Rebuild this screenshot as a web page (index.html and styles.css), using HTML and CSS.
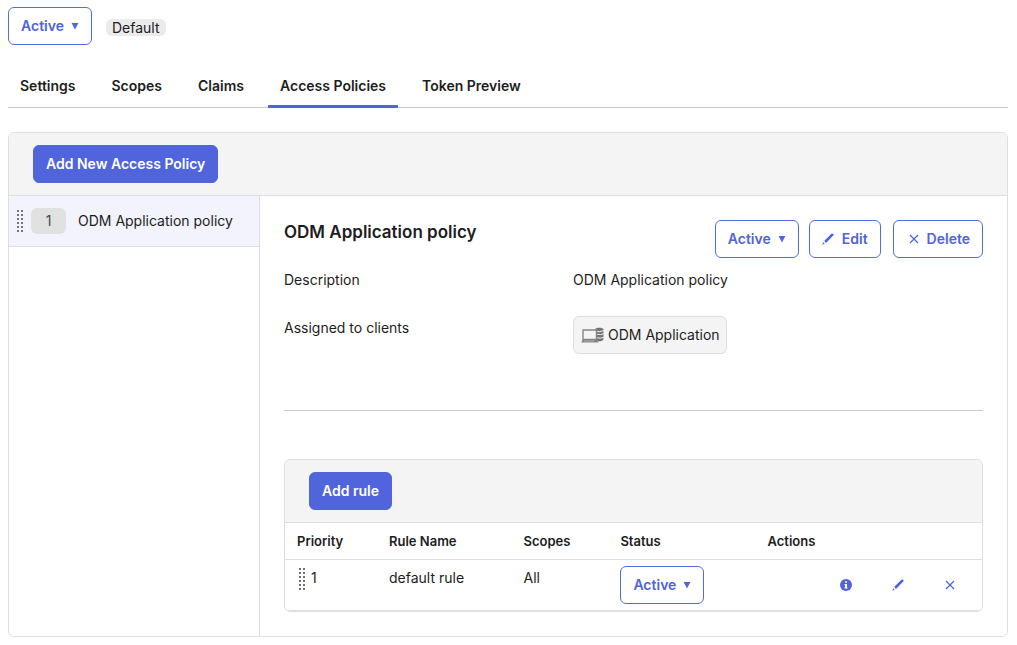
FILE: index.html
```html
<!DOCTYPE html>
<html lang="en">
<head>
<meta charset="utf-8">
<meta name="viewport" content="width=device-width, initial-scale=1">
<title>Access Policies</title>
<link rel="stylesheet" href="styles.css">
</head>
<body>
<svg class="sprite" aria-hidden="true">
  <symbol id="caret" viewBox="0 0 8 8"><path d="M0.6 1h6.8L4 7.6z" fill="currentColor"/></symbol>
  <symbol id="pencil" viewBox="0 0 12 12"><path d="M2.2 8 9.400 .8Q10.300 .1 11.200 .9T11.300 2.600L4 9.900zM1.300 9.300 2.700 10.700.2 11.800z" fill="currentColor"/></symbol>
  <symbol id="cross" viewBox="0 0 10 10"><path d="M1 1l8 8M9 1L1 9" fill="none" stroke="currentColor" stroke-width="1.200"/></symbol>
  <symbol id="info" viewBox="0 0 12 12"><circle cx="6" cy="6" r="6" fill="currentColor"/><path d="M5 2.200h2v1.600H5zM4.500 4.900H7v3.800h.7v.9H4.400v-.9H5V5.800h-.5z" fill="#fff"/></symbol>
  <symbol id="grip" viewBox="0 0 6 22"><path d="M1 0v22M5 0v22" stroke="currentColor" stroke-width="2" stroke-dasharray="2 2"/></symbol>
</svg>

<header class="status-bar">
  <span class="status">
    <select class="btn status-select" aria-label="Server status"><option>Active</option></select>
    <svg class="status-caret" aria-hidden="true"><use href="#caret"/></svg>
  </span>
  <span class="badge">Default</span>
</header>

<nav class="tabs">
  <a class="tab" href="#settings">Settings</a>
  <a class="tab" href="#scopes">Scopes</a>
  <a class="tab" href="#claims">Claims</a>
  <a class="tab tab-current" href="#policies" aria-current="page">Access Policies</a>
  <a class="tab" href="#preview">Token Preview</a>
</nav>

<main class="panel">
  <div class="toolbar"><button class="btn btn-primary" type="button">Add New Access Policy</button></div>
  <div class="columns">
    <aside class="sidebar">
      <a class="policy" href="#policy-1">
        <svg class="grip" aria-hidden="true"><use href="#grip"/></svg>
        <span class="order">1</span>
        <span>ODM Application policy</span>
      </a>
    </aside>
    <section class="detail">
      <div class="detail-head">
        <h2 class="title">ODM Application policy</h2>
        <div class="detail-actions">
          <span class="status">
            <select class="btn status-select" aria-label="Policy status"><option>Active</option></select>
            <svg class="status-caret" aria-hidden="true"><use href="#caret"/></svg>
          </span>
          <button class="btn" type="button"><svg class="icon" aria-hidden="true"><use href="#pencil"/></svg>Edit</button>
          <button class="btn btn-delete" type="button"><svg class="icon icon-cross" aria-hidden="true"><use href="#cross"/></svg>Delete</button>
        </div>
      </div>
      <dl class="facts">
        <dt>Description</dt>
        <dd>ODM Application policy</dd>
        <dt>Assigned to clients</dt>
        <dd class="clients"><span class="client">
          <svg class="client-icon" viewBox="0 0 23 17" aria-hidden="true">
            <path d="M14 2.500C14 .2 22.500 .2 22.500 2.500V12c0 2.200-4 2.500-5.500 2.200L14 12z" fill="#737373"/>
            <path d="M13.500 3.600q4.500 2.200 9.500 0M16 7.200q4 1 7-.6M16 10.800q4 1 7-.6" fill="none" stroke="#f4f4f4"/>
            <path d="M2 3h13.500v9.500H2z" fill="#f4f4f4" stroke="#858585" stroke-width="1.400"/>
            <path d="M1.500 13h15l1.200 2.500H.2z" fill="#858585"/>
            <path d="M3 14h10" stroke="#c8c8c8" stroke-width=".6"/>
          </svg>ODM Application</span></dd>
      </dl>
      <hr class="divider">
      <div class="rules">
        <div class="toolbar"><button class="btn btn-primary" type="button">Add rule</button></div>
        <table class="rule-table">
          <colgroup><col class="col-priority"><col class="col-name"><col class="col-scopes"><col class="col-status"><col></colgroup>
          <thead><tr><th>Priority</th><th>Rule Name</th><th>Scopes</th><th>Status</th><th>Actions</th></tr></thead>
          <tbody><tr>
            <td><span class="priority"><svg class="grip" aria-hidden="true"><use href="#grip"/></svg>1</span></td>
            <td>default rule</td>
            <td>All</td>
            <td class="cell-control"><span class="status">
              <select class="btn status-select" aria-label="Rule status"><option>Active</option></select>
              <svg class="status-caret" aria-hidden="true"><use href="#caret"/></svg>
            </span></td>
            <td class="cell-control"><div class="rule-actions">
              <button class="icon-btn" type="button" aria-label="Rule information"><svg class="icon" aria-hidden="true"><use href="#info"/></svg></button>
              <button class="icon-btn" type="button" aria-label="Edit rule"><svg class="icon" aria-hidden="true"><use href="#pencil"/></svg></button>
              <button class="icon-btn" type="button" aria-label="Delete rule"><svg class="icon icon-cross" aria-hidden="true"><use href="#cross"/></svg></button>
            </div></td>
          </tr></tbody>
        </table>
      </div>
    </section>
  </div>
</main>
</body>
</html>
```

FILE: styles.css
```css
* { box-sizing: border-box; }

body {
  margin: 7px 9px 8px 8px;
  background: #fff;
  color: #1d1d21;
  font: 14px/20px Inter, "Liberation Sans", sans-serif;
}

.sprite { display: block; width: 0; height: 0; }

.btn {
  display: inline-flex;
  align-items: center;
  gap: 8px;
  height: 38px;
  padding: 0 12px;
  border: 1px solid #546be7;
  border-radius: 6px;
  background: #fff;
  color: #4f63dc;
  font: 600 14px/20px Inter, "Liberation Sans", sans-serif;
  white-space: nowrap;
}

.btn-primary {
  background: #5064db;
  border-color: #5064db;
  color: #fff;
}

.btn-delete { padding-left: 15px; margin-left: 2px; }

.icon { width: 12px; height: 12px; }
.icon-cross { width: 10px; height: 10px; }

.status { display: inline-grid; align-items: center; width: 84px; color: #4f63dc; }
.status-select { grid-area: 1 / 1; width: 100%; appearance: none; }
.status-caret {
  grid-area: 1 / 1;
  justify-self: end;
  width: 8px;
  height: 8px;
  margin-right: 13px;
  pointer-events: none;
}

.status-bar { display: flex; align-items: center; gap: 14px; }
.badge {
  margin-top: 3px;
  padding: 0 6px;
  border-radius: 6px;
  background: #ebebeb;
  line-height: 17px;
}

.tabs {
  display: flex;
  gap: 12px;
  margin-top: 20px;
  border-bottom: 1px solid #c9c9c9;
}
.tab {
  margin-bottom: -1px;
  padding: 11px 12px 9px;
  border-bottom: 3px solid transparent;
  color: inherit;
  font-weight: 600;
  text-decoration: none;
}
.tab-current { border-color: #5064db; }

.panel {
  margin-top: 24px;
  overflow: hidden;
  border: 1px solid #dedede;
  border-radius: 6px;
}
.toolbar {
  display: flex;
  padding: 12px 24px;
  border-bottom: 1px solid #dedede;
  background: #f4f4f4;
}
.columns { display: flex; }
.sidebar { flex: 0 0 251px; border-right: 1px solid #dedede; }
.policy {
  display: flex;
  align-items: center;
  height: 51px;
  padding-left: 8px;
  border-bottom: 1px solid #dedede;
  background: #f2f3fd;
  color: inherit;
  text-decoration: none;
}
.grip { width: 6px; height: 22px; color: #72727a; }
.order {
  width: 35px;
  margin: 0 12px 0 8px;
  border-radius: 6px;
  background: #e1e1e1;
  color: #494950;
  line-height: 26px;
  text-align: center;
}

.detail { flex: 1; min-width: 0; padding: 24px; }
.detail-head { display: flex; justify-content: space-between; }
.detail-actions { display: flex; gap: 10px; }
.title { margin: 0; font-size: 17px; font-weight: 600; line-height: 24px; }

.facts {
  display: grid;
  grid-template-columns: 289px 1fr;
  row-gap: 28px;
  margin: 12px 0 56px;
}
.facts dd { margin: 0; }
.clients { margin-top: -2px; }
.client {
  display: flex;
  align-items: center;
  width: fit-content;
  gap: 4px;
  height: 38px;
  margin-top: -2px;
  padding: 0 6px 0 7px;
  border: 1px solid #dedede;
  border-radius: 6px;
  background: #f4f4f4;
}
.client-icon { width: 23px; height: 17px; }
.divider { margin: 0 0 48px; border: 0; border-top: 1px solid #c9c9c9; }

.rules { overflow: hidden; border: 1px solid #dedede; border-radius: 6px; }
.rule-table { width: 100%; border-collapse: collapse; table-layout: fixed; }
.col-priority { width: 13.2%; }
.col-name { width: 19.3%; }
.col-scopes { width: 13.9%; }
.col-status { width: 21.1%; }
.rule-table th {
  height: 36px;
  padding: 0 12px;
  border-bottom: 1px solid #dedede;
  font-size: 13px;
  font-weight: 600;
  text-align: left;
}
.rule-table td {
  height: 51px;
  padding: 8px 12px;
  border-bottom: 1px solid #dedede;
  vertical-align: top;
}
.rule-table .cell-control { padding: 6px 12px; }
.cell-control .status { vertical-align: top; }
.priority { display: flex; gap: 6px; padding-left: 2px; }
.rule-actions {
  display: flex;
  justify-content: flex-end;
  align-items: center;
  gap: 32px;
  height: 38px;
  padding-right: 10px;
}
.icon-btn {
  display: grid;
  place-items: center;
  width: 20px;
  height: 20px;
  padding: 0;
  border: 0;
  background: none;
  color: #4f63dc;
}
```
